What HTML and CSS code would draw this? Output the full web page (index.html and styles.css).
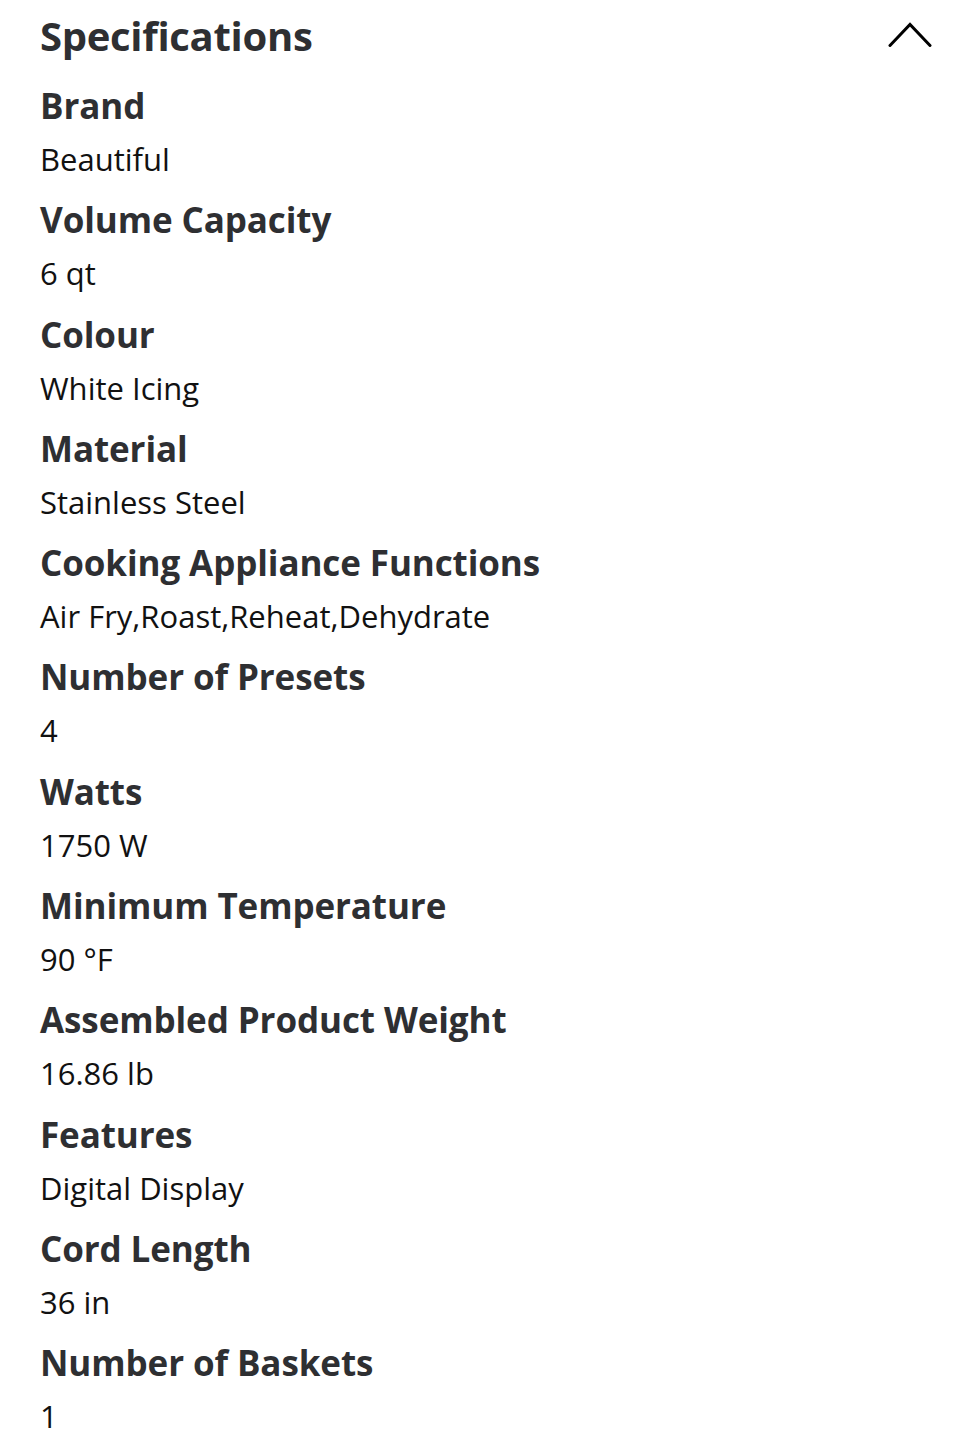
FILE: index.html
```html
<!DOCTYPE html>
<html>
<head>
<meta charset="utf-8">
<link rel="stylesheet" href="styles.css">
</head>
<body>
<section class="specs">
  <div class="head">
    <h2 class="title">Specifications</h2>
    <svg class="chev" width="44" height="26" viewBox="0 0 44 26"><path d="M2 24.5 L22 3.5 L42 24.5" fill="none" stroke="#000" stroke-width="3" stroke-linecap="round" stroke-linejoin="miter"/></svg>
  </div>
  <dl class="list">
    <div class="item"><dt>Brand</dt><dd>Beautiful</dd></div>
    <div class="item"><dt>Volume Capacity</dt><dd>6 qt</dd></div>
    <div class="item"><dt>Colour</dt><dd>White Icing</dd></div>
    <div class="item"><dt>Material</dt><dd>Stainless Steel</dd></div>
    <div class="item"><dt>Cooking Appliance Functions</dt><dd>Air Fry,Roast,Reheat,Dehydrate</dd></div>
    <div class="item"><dt>Number of Presets</dt><dd>4</dd></div>
    <div class="item"><dt>Watts</dt><dd>1750 W</dd></div>
    <div class="item"><dt>Minimum Temperature</dt><dd>90 °F</dd></div>
    <div class="item"><dt>Assembled Product Weight</dt><dd>16.86 lb</dd></div>
    <div class="item"><dt>Features</dt><dd>Digital Display</dd></div>
    <div class="item"><dt>Cord Length</dt><dd>36 in</dd></div>
    <div class="item"><dt>Number of Baskets</dt><dd>1</dd></div>
  </dl>
</section>
</body>
</html>
```
FILE: styles.css
```css
html, body { margin: 0; padding: 0; background: #fff; }
body { font-family: "Open Sans", Lato, sans-serif; color: #2e2f32; }
.specs { padding: 0 46px 0 40px; }
.head { display: flex; justify-content: space-between; align-items: center; height: 72px; }
.title { margin: 0; font-size: 40px; font-weight: 700; line-height: 72px; letter-spacing: -0.3px; }
.chev { display: block; margin-top: -4px; }
.list { margin: 0; padding: 0; }
.item { height: 114.3px; display: flex; flex-direction: column; }
dt { font-size: 35px; font-weight: 700; line-height: 68px; margin: 0; letter-spacing: -0.1px; }
dd { font-size: 31px; font-weight: 400; line-height: 38px; margin: 0; color: #111; }
```
